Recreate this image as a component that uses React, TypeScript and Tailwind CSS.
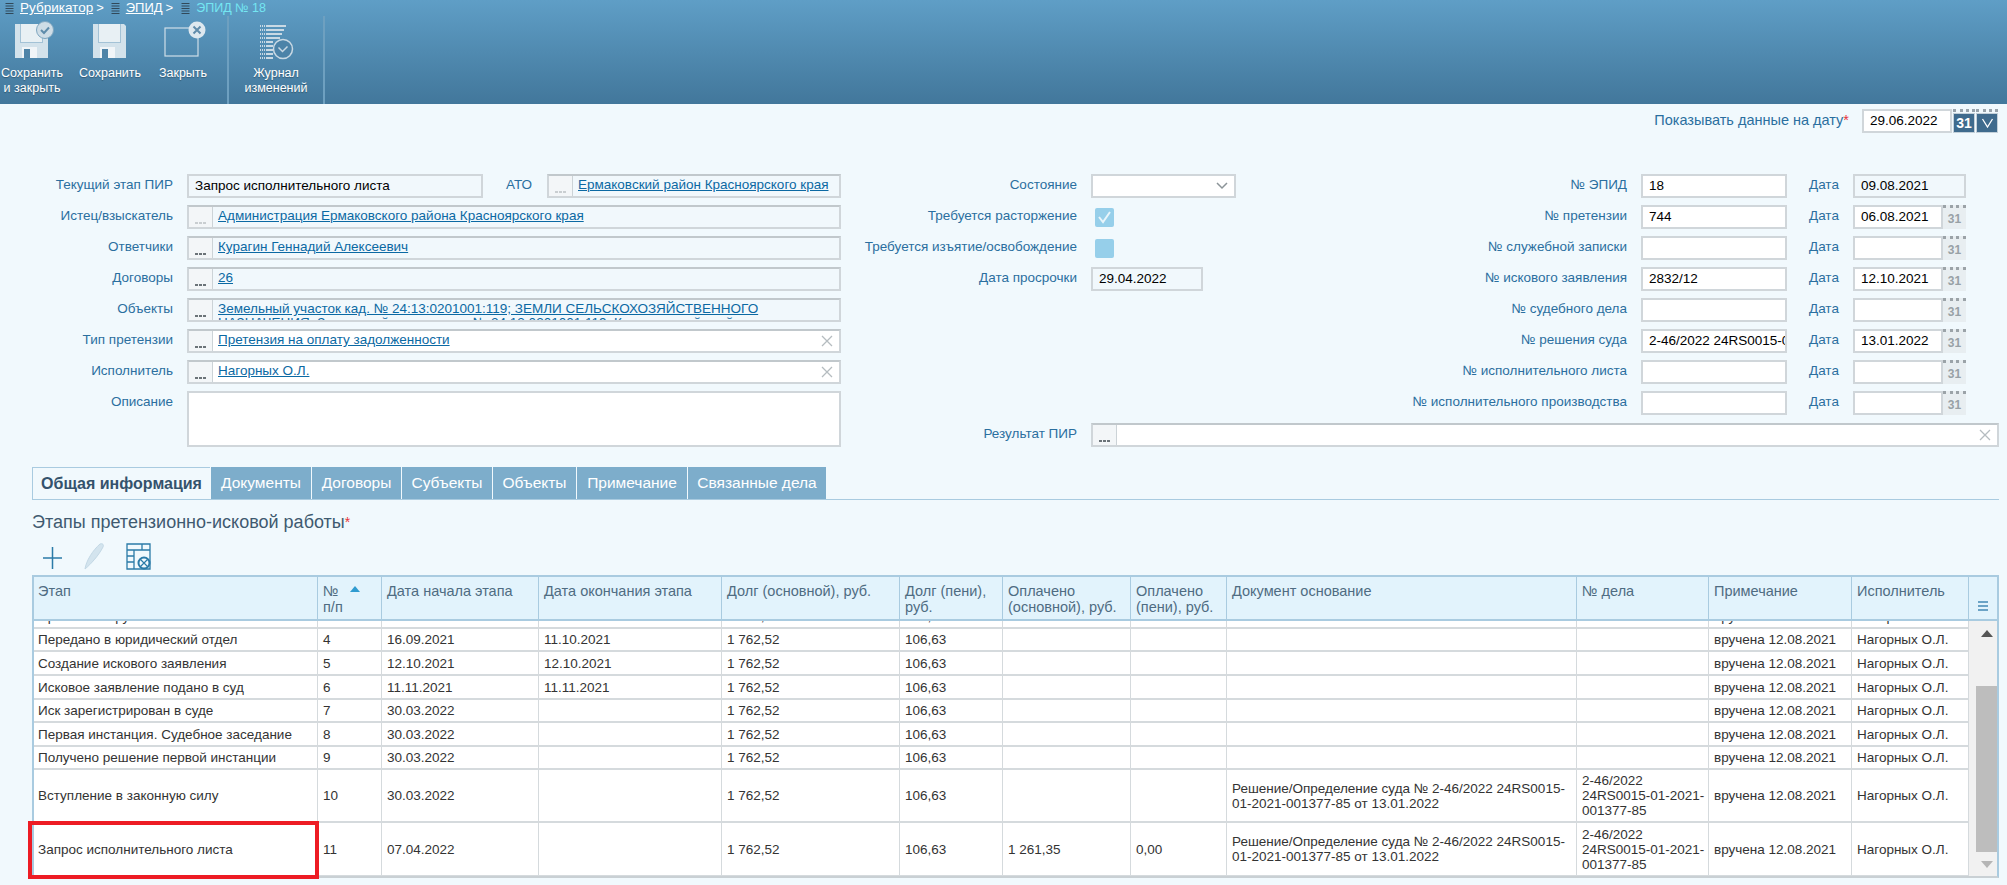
import type { ReactNode } from 'react'

const columns = [286, 64, 157, 183, 178, 103, 128, 96, 350, 132, 143, 117]

const headers = [
  'Этап',
  '№ п/п',
  'Дата начала этапа',
  'Дата окончания этапа',
  'Долг (основной), руб.',
  'Долг (пени), руб.',
  'Оплачено (основной), руб.',
  'Оплачено (пени), руб.',
  'Документ основание',
  '№ дела',
  'Примечание',
  'Исполнитель',
]

const doc = 'Решение/Определение суда № 2-46/2022 24RS0015-01-2021-001377-85 от 13.01.2022'
const caseNo = '2-46/2022 24RS0015-01-2021-001377-85'
const note = 'вручена 12.08.2021'
const who = 'Нагорных О.Л.'

const rows = [
  { h: 'h-[24px]', c: ['Претензия вручена', '3', '11.08.2021', '16.09.2021', '1 762,52', '106,63', '', '', '', '', note, who] },
  { h: 'h-[23px]', c: ['Передано в юридический отдел', '4', '16.09.2021', '11.10.2021', '1 762,52', '106,63', '', '', '', '', note, who] },
  { h: 'h-[24px]', c: ['Создание искового заявления', '5', '12.10.2021', '12.10.2021', '1 762,52', '106,63', '', '', '', '', note, who] },
  { h: 'h-[24px]', c: ['Исковое заявление подано в суд', '6', '11.11.2021', '11.11.2021', '1 762,52', '106,63', '', '', '', '', note, who] },
  { h: 'h-[23px]', c: ['Иск зарегистрирован в суде', '7', '30.03.2022', '', '1 762,52', '106,63', '', '', '', '', note, who] },
  { h: 'h-[24px]', c: ['Первая инстанция. Судебное заседание', '8', '30.03.2022', '', '1 762,52', '106,63', '', '', '', '', note, who] },
  { h: 'h-[23px]', c: ['Получено решение первой инстанции', '9', '30.03.2022', '', '1 762,52', '106,63', '', '', '', '', note, who] },
  { h: 'h-[53px]', c: ['Вступление в законную силу', '10', '30.03.2022', '', '1 762,52', '106,63', '', '', doc, caseNo, note, who] },
  { h: 'h-[54px]', c: ['Запрос исполнительного листа', '11', '07.04.2022', '', '1 762,52', '106,63', '1 261,35', '0,00', doc, caseNo, note, who] },
]

const tabs = ['Документы', 'Договоры', 'Субъекты', 'Объекты', 'Примечание', 'Связанные дела']
const tabWidths = ['w-[100px]', 'w-[89px]', 'w-[90px]', 'w-[83px]', 'w-[110px]', 'w-[138px]']

function Floppy({ badge }: { badge?: boolean }) {
  return (
    <svg width="56" height="42" viewBox="0 0 56 42">
      <path d="M11 5h31l2 2v32H11z" fill="#d3e2eb" />
      <path d="M16 5h23v19H16z" fill="#a3c2d6" />
      <path d="M17 5h21v18H17z" fill="#e8f0f4" />
      <path d="M18 28h15v11H18z" fill="#f1f5f8" />
      <path d="M20 30h6v9h-6z" fill="#4f84a8" />
      {badge && (
        <g>
          <circle cx="41" cy="11" r="8.500" fill="#cfdde6" stroke="#7ea6c0" />
          <path d="M37 11l3 3 5-5.500" fill="none" stroke="#5f8cab" strokeWidth="2" />
        </g>
      )}
    </svg>
  )
}

function CloseIcon() {
  return (
    <svg width="56" height="42" viewBox="0 0 56 42">
      <rect x="10" y="9" width="33" height="28" fill="none" stroke="#cfdee8" strokeWidth="1.200" />
      <circle cx="42" cy="11" r="8.500" fill="#dde8ef" />
      <path d="M38.500 7.500l7 7m0-7l-7 7" stroke="#5f8cab" strokeWidth="2" />
    </svg>
  )
}

function JournalIcon() {
  return (
    <svg width="40" height="42" viewBox="0 0 40 42">
      {[7, 11, 15, 19, 23, 27, 31, 35, 39].map((y, i) => (
        <g key={y}>
          <path d={`M4 ${y}h5`} stroke="#c9d9e4" strokeWidth="2" strokeDasharray="1 1" />
          <path d={`M10 ${y}h${i < 4 ? 20 - i * 2 : 7}`} stroke="#c9d9e4" strokeWidth="2" />
        </g>
      ))}
      <circle cx="27" cy="30" r="9.500" fill="#4c83a8" stroke="#c9d9e4" strokeWidth="1.500" />
      <path d="M22.500 28.500l4 4 5-5" fill="none" stroke="#c9d9e4" strokeWidth="1.500" />
    </svg>
  )
}

function CrumbIcon() {
  return (
    <svg width="11" height="13" viewBox="0 0 11 13" className="shrink-0">
      <path d="M1.500 1.500h8M1.500 4h8M1.500 6.500h8M1.500 9h8M1.500 11.500h8" stroke="#31495a" strokeWidth="1" />
    </svg>
  )
}

function ToolButton({ icon, lines, w }: { icon: ReactNode; lines: string[]; w: string }) {
  return (
    <div className={`${w} flex flex-col items-center pt-[3px] text-[12.5px] leading-[15px] text-white [text-shadow:0_1px_1px_rgba(0,0,0,0.3)]`}>
      <div className="h-[43px]">{icon}</div>
      <div className="mt-[4px] text-center whitespace-nowrap">
        {lines.map((l) => (
          <div key={l}>{l}</div>
        ))}
      </div>
    </div>
  )
}

function Label({ children, w }: { children: ReactNode; w: string }) {
  return (
    <div className={`${w} shrink-0 pr-[14px] text-right text-[13.5px] leading-[22px] text-[#2b6f9f] whitespace-nowrap`}>
      {children}
    </div>
  )
}

function Dots({ faded }: { faded?: boolean }) {
  return (
    <div className="w-[24px] shrink-0 self-stretch border-r border-[#ccd3d7] flex items-end justify-center pb-[3px] bg-[#f3f6f8]">
      <div className={`flex gap-[1.5px] ${faded ? 'opacity-30' : ''}`}>
        <span className="size-[2.5px] bg-[#6b7378]" />
        <span className="size-[2.5px] bg-[#6b7378]" />
        <span className="size-[2.5px] bg-[#6b7378]" />
      </div>
    </div>
  )
}

function Lookup({ text, second, faded, white, clear, w = 'w-[654px]' }: { text?: string; second?: string; faded?: boolean; white?: boolean; clear?: boolean; w?: string }) {
  return (
    <div className={`${w} h-[24px] flex items-stretch border-2 border-[#d0d6da] border-t-[#c1c8cc] overflow-hidden ${white ? 'bg-white' : 'bg-[#f1f8fc]'}`}>
      <Dots faded={faded} />
      {second ? (
        <div className="flex-1 pl-[5px] pt-[2px] text-[13.5px] leading-[14px] text-[#0b69a3] underline whitespace-nowrap overflow-hidden">
          <div>{text}</div>
          <div>{second}</div>
        </div>
      ) : (
        <div className="flex-1 pl-[5px] text-[13.5px] leading-[17px] text-[#0b69a3] underline whitespace-nowrap">{text}</div>
      )}
      {clear && (
        <svg width="24" height="20" viewBox="0 0 24 20" className="shrink-0 bg-white">
          <path d="M7 5l10 10m0-10L7 15" stroke="#b5bcc0" strokeWidth="1.300" />
        </svg>
      )}
    </div>
  )
}

function Input({ value = '', w, readOnly }: { value?: string; w: string; readOnly?: boolean }) {
  return (
    <div className={`${w} h-[24px] shrink-0 border-2 border-[#d0d6da] pl-[6px] text-[13.5px] leading-[19px] text-black overflow-hidden whitespace-nowrap ${readOnly ? 'bg-[#f1f8fc]' : 'bg-white'}`}>
      {value}
    </div>
  )
}

function DateInput({ value = '' }: { value?: string }) {
  return (
    <div className="w-[113px] h-[24px] flex">
      <div className="w-[90px] h-full border-2 border-[#d0d6da] bg-white pl-[6px] text-[13.5px] leading-[19px] text-black">{value}</div>
      <div className="w-[23px] h-full border-t-[3px] border-dotted border-[#9ba3a8] bg-[#e8eef1] text-center text-[12px] font-bold leading-[23px] text-[#98a1a6]">31</div>
    </div>
  )
}

function RightRow({ label, value, date, readOnlyDate }: { label: string; value?: string; date?: string; readOnlyDate?: boolean }) {
  return (
    <div className="h-[31px] flex items-start">
      <Label w="w-[405px]">{label}</Label>
      <Input value={value} w="w-[146px]" />
      <div className="w-[66px] pl-[22px] text-[13.5px] leading-[22px] text-[#2b6f9f]">Дата</div>
      {readOnlyDate ? <Input value={date} w="w-[113px]" readOnly /> : <DateInput value={date} />}
    </div>
  )
}

function LeftRow({ label, children }: { label: string; children: ReactNode }) {
  return (
    <div className="h-[31px] flex items-start">
      <Label w="w-[187px]">{label}</Label>
      {children}
    </div>
  )
}

function Checkbox({ checked }: { checked?: boolean }) {
  return (
    <div className="ml-[4px] mt-[3px] size-[19px] rounded-[2px] bg-[#96cfea] flex items-center justify-center">
      {checked && (
        <svg width="15" height="15" viewBox="0 0 15 15"><path d="M2 7l4 5 7-10" fill="none" stroke="#e8f5fb" strokeWidth="2" /></svg>
      )}
    </div>
  )
}

function DarkButton({ children }: { children: ReactNode }) {
  return (
    <div className="ml-[1px] w-[22px] h-[24px] border-t-[3px] border-dotted border-[#98a3ab]">
      <div className="mt-px h-[20px] bg-[#3f6b8d] border border-[#c3d0d9] flex items-center justify-center text-[14px] font-bold leading-[18px] text-white">
        {children}
      </div>
    </div>
  )
}

function GridTable() {
  return (
    <div className="mx-[32px] w-[1967px] h-[303px] border-2 border-[#a9cbe0] border-b-[#c9d0d4] bg-white text-[13.5px] leading-[15px] overflow-hidden">
      <div className="flex h-[44px] bg-[#e2f3fc] border-b-2 border-[#a9cbe0] text-[14.5px] leading-[16px] text-[#4f6c82]">
        {headers.map((h, i) => (
          <div key={h} style={{ width: i === 0 ? columns[0] - 2 : columns[i] }} className={`shrink-0 border-r border-[#a9cbe0] pr-[3px] pt-[6px] ${i === 0 ? 'pl-[4px]' : 'pl-[5px]'}`}>
            {i === 1 ? (
              <div className="relative">
                №<br />п/п
                <svg width="10" height="6" viewBox="0 0 10 6" className="absolute left-[27px] top-[3px]"><path d="M5 0l5 6H0z" fill="#2f9bd0" /></svg>
              </div>
            ) : (
              h
            )}
          </div>
        ))}
        <div className="flex-1 flex items-end justify-center pb-[7px]">
          <svg width="12" height="12" viewBox="0 0 12 12"><path d="M1 2h10M1 6h10M1 10h10" stroke="#6ba3c6" strokeWidth="2" /></svg>
        </div>
      </div>
      <div className="flex h-[255px]">
        <div className="w-[1935px] overflow-hidden">
          <div className="-mt-[16px]">
            {rows.map((r) => (
              <div key={r.c[1]} className={`${r.h} flex border-b-2 border-[#d5dadd] text-[#333]`}>
                {r.c.map((cell, i) => (
                  <div key={i} style={{ width: i === 0 ? columns[0] - 2 : columns[i] }} className={`shrink-0 h-full border-r border-[#d5dadd] pr-[3px] flex items-center ${i === 0 ? 'pl-[4px]' : 'pl-[5px]'}`}>
                    <div>{cell}</div>
                  </div>
                ))}
              </div>
            ))}
          </div>
        </div>
        <div className="flex-1 bg-[#f1f1f1] flex flex-col items-end">
          <svg width="12" height="7" viewBox="0 0 12 7" className="mt-[9px] mr-[4px] shrink-0"><path d="M6 0l6 7H0z" fill="#555" /></svg>
          <div className="mt-[49px] w-[21px] h-[166px] bg-[#bdbdbd]" />
          <svg width="12" height="7" viewBox="0 0 12 7" className="mt-[9px] mr-[4px] shrink-0"><path d="M6 7L0 0h12z" fill="#b5b5b5" /></svg>
        </div>
      </div>
    </div>
  )
}

export default function App() {
  return (
    <div className="relative font-['Liberation_Sans',Arial,sans-serif] w-[2007px] h-[885px] overflow-hidden bg-[#f1f9fd]">
      <div className="h-[104px] bg-gradient-to-b from-[#5f9ec6] to-[#42779b]">
        <div className="h-[16px] flex items-center pl-[4px] text-[13px] leading-[16px] text-white">
          <CrumbIcon />
          <span className="ml-[5px] underline text-[13.5px]">Рубрикатор</span>
          <span className="ml-[3px]">&gt;</span>
          <span className="ml-[6px]"><CrumbIcon /></span>
          <span className="ml-[5px] underline">ЭПИД</span>
          <span className="ml-[3px]">&gt;</span>
          <span className="ml-[7px]"><CrumbIcon /></span>
          <span className="ml-[5px] text-[12.5px] text-[#74e6f2]">ЭПИД № 18</span>
        </div>
        <div className="h-[88px] flex">
          <div className="w-[229px] flex gap-[14px] border-r-2 border-[#6ea0c0]">
            <ToolButton w="w-[64px]" icon={<Floppy badge />} lines={['Сохранить', 'и закрыть']} />
            <ToolButton w="w-[64px]" icon={<Floppy />} lines={['Сохранить']} />
            <ToolButton w="w-[54px]" icon={<CloseIcon />} lines={['Закрыть']} />
          </div>
          <div className="w-[96px] border-r-2 border-[#6ea0c0]">
            <ToolButton w="w-[94px]" icon={<JournalIcon />} lines={['Журнал', 'изменений']} />
          </div>
        </div>
      </div>

      <div className="h-[70px] pt-[5px] pr-[9px] flex justify-end items-start">
        <div className="text-[14.5px] leading-[22px] text-[#2b6f9f] mr-[13px]">
          Показывать данные на дату<span className="text-[#e8343a]">*</span>
        </div>
        <div className="w-[90px] h-[24px] border-2 border-[#d0d6da] bg-white pl-[6px] text-[13.5px] leading-[20px] text-black">29.06.2022</div>
        <DarkButton>31</DarkButton>
        <DarkButton>
          <svg width="13" height="10" viewBox="0 0 13 10"><path d="M1.500 1L6.500 9l5-8" fill="none" stroke="#fff" strokeWidth="1.300" /></svg>
        </DarkButton>
      </div>

      <div className="flex h-[293px]">
        <div className="w-[841px] shrink-0">
          <LeftRow label="Текущий этап ПИР">
            <Input value="Запрос исполнительного листа" w="w-[296px]" readOnly />
            <div className="w-[64px] pl-[23px] text-[13.5px] leading-[22px] text-[#2b6f9f]">АТО</div>
            <Lookup text="Ермаковский район Красноярского края" faded w="w-[294px]" />
          </LeftRow>
          <LeftRow label="Истец/взыскатель">
            <Lookup text="Администрация Ермаковского района Красноярского края" faded />
          </LeftRow>
          <LeftRow label="Ответчики">
            <Lookup text="Курагин Геннадий Алексеевич" />
          </LeftRow>
          <LeftRow label="Договоры">
            <Lookup text="26" />
          </LeftRow>
          <LeftRow label="Объекты">
            <Lookup
              text="Земельный участок кад. № 24:13:0201001:119; ЗЕМЛИ СЕЛЬСКОХОЗЯЙСТВЕННОГО"
              second="НАЗНАЧЕНИЯ; Земельный участок кад. № 24:13:0201001:119; Красноярский край"
            />
          </LeftRow>
          <LeftRow label="Тип претензии">
            <Lookup text="Претензия на оплату задолженности" white clear />
          </LeftRow>
          <LeftRow label="Исполнитель">
            <Lookup text="Нагорных О.Л." white clear />
          </LeftRow>
          <LeftRow label="Описание">
            <div className="w-[654px] h-[56px] border-2 border-[#d0d6da] bg-white" />
          </LeftRow>
        </div>

        <div className="flex-1">
          <div className="flex h-[249px]">
            <div className="w-[395px] shrink-0">
              <div className="h-[31px] flex items-start">
                <Label w="w-[250px]">Состояние</Label>
                <div className="w-[145px] h-[24px] shrink-0 border-2 border-[#d0d6da] bg-white flex items-center justify-end pr-[6px]">
                  <svg width="12" height="8" viewBox="0 0 12 8"><path d="M1 1l5 5 5-5" fill="none" stroke="#8b9498" strokeWidth="1.500" /></svg>
                </div>
              </div>
              <div className="h-[31px] flex items-start">
                <Label w="w-[250px]">Требуется расторжение</Label>
                <Checkbox checked />
              </div>
              <div className="h-[31px] flex items-start">
                <Label w="w-[250px]">Требуется изъятие/освобождение</Label>
                <Checkbox />
              </div>
              <div className="h-[31px] flex items-start">
                <Label w="w-[250px]">Дата просрочки</Label>
                <Input value="29.04.2022" w="w-[112px]" readOnly />
              </div>
            </div>
            <div className="w-[730px] shrink-0">
              <RightRow label="№ ЭПИД" value="18" date="09.08.2021" readOnlyDate />
              <RightRow label="№ претензии" value="744" date="06.08.2021" />
              <RightRow label="№ служебной записки" />
              <RightRow label="№ искового заявления" value="2832/12" date="12.10.2021" />
              <RightRow label="№ судебного дела" />
              <RightRow label="№ решения суда" value="2-46/2022 24RS0015-01-2021-001377-85" date="13.01.2022" />
              <RightRow label="№ исполнительного листа" />
              <RightRow label="№ исполнительного производства" />
            </div>
          </div>
          <div className="flex items-start">
            <Label w="w-[250px]">Результат ПИР</Label>
            <Lookup clear white w="w-[908px]" />
          </div>
        </div>
      </div>

      <div className="mx-[32px] h-[33px] flex border-b border-[#a9cbe0] w-[1967px]">
        <div className="w-[178px] mr-px border-l border-t border-[#a9cbe0] bg-[#f1f9fd] text-center text-[16px] font-bold leading-[31px] text-[#34526c]">
          Общая информация
        </div>
        {tabs.map((t, i) => (
          <div key={t} className={`${tabWidths[i]} mr-px bg-[#7dadcb] text-center text-[15.5px] leading-[31px] text-white`}>
            {t}
          </div>
        ))}
      </div>

      <div className="mx-[32px] mt-[11px] h-[24px] text-[18px] leading-[22px] text-[#3f5a70]">
        Этапы претензионно-исковой работы<span className="text-[#e8343a] text-[14px] align-top">*</span>
      </div>

      <div className="mx-[42px] mt-[8px] h-[32px] flex items-start gap-[21px]">
        <svg width="21" height="27" viewBox="0 0 21 27"><path d="M10.500 4v22M1 15h19" stroke="#2b7ba8" strokeWidth="1.500" /></svg>
        <svg width="21" height="27" viewBox="0 0 21 27"><path d="M1 26c1-8 8-19 15-25 3-1 4 1 3 3C15 12 7 21 1 26z" fill="#d3e4ee" stroke="#c3d8e5" /></svg>
        <svg width="26" height="27" viewBox="0 0 26 27">
          <path d="M1 1h23v25H1zM1 7h23M8 7v19M1 13h7M1 19h7M16 1v6" fill="none" stroke="#2b7ba8" strokeWidth="1.300" />
          <circle cx="18" cy="20" r="5.500" fill="#f1f9fd" stroke="#2b7ba8" strokeWidth="2" />
          <path d="M14.500 16.500l7 7m0-7l-7 7" stroke="#2b7ba8" strokeWidth="1.200" />
        </svg>
      </div>

      <GridTable />

      <div className="absolute left-[28px] top-[821px] w-[291px] h-[58px] border-4 border-[#ed1c24]" />
    </div>
  )
}
